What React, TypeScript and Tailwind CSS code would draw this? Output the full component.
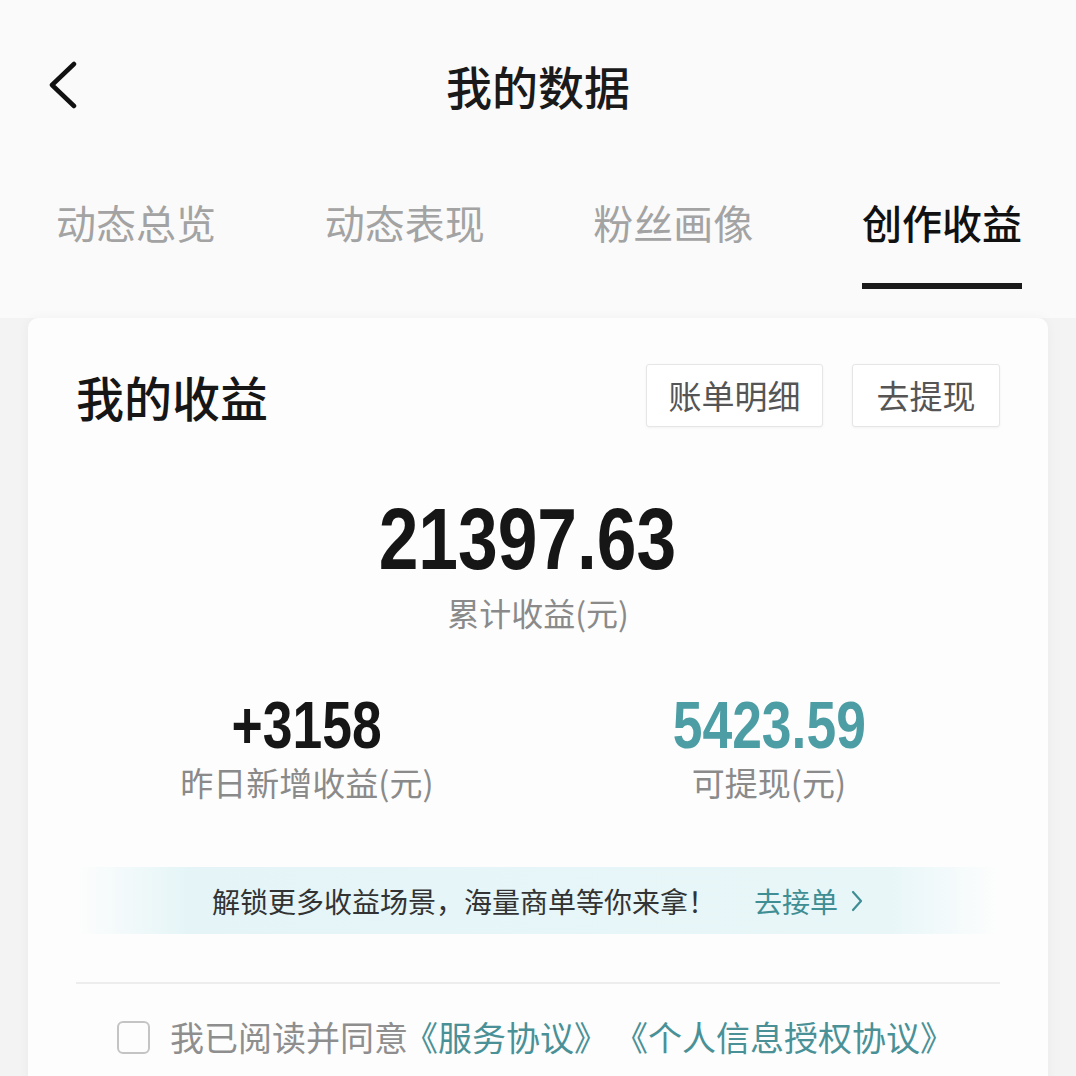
import React from 'react';

const cjk = "font-['Noto_Sans_CJK_SC','Noto_Sans',sans-serif]";
const num = "font-['Liberation_Sans','Arial',sans-serif]";

const tabs = ['动态总览', '动态表现', '粉丝画像', '创作收益'];

const BackIcon = () => (
  <svg width="34" height="48" viewBox="0 0 34 48" fill="none">
    <polyline points="28,3 6,24 28,45" stroke="#111" strokeWidth="4.5" strokeLinecap="round" strokeLinejoin="round" />
  </svg>
);

const Stat = ({ value, label, teal }: { value: string; label: string; teal?: boolean }) => (
  <div className="flex flex-col items-center">
    <div className={`${num} font-bold text-[66px] leading-[66px] scale-x-[0.81] ${teal ? 'text-[#4d9da4]' : 'text-[#161616]'}`}>{value}</div>
    <div className={`${cjk} mt-[8px] text-[33px] leading-[33px] text-[#8a8a8a]`}>{label}</div>
  </div>
);

export default function App() {
  return (
    <div className={`${cjk} w-[1076px] h-[1076px] overflow-hidden bg-[#f3f3f4]`}>
      {/* header */}
      <div className="bg-[#fafafa]">
        <div className="relative h-[170px] flex items-center justify-center">
          <div className="absolute left-[46px] top-[61px]">
            <BackIcon />
          </div>
          <h1 className="text-[46px] leading-[46px] font-medium text-[#1a1a1a]">我的数据</h1>
        </div>
        <div className="flex justify-between pl-[56px] pr-[54px] pt-[32px] h-[148px]">
          {tabs.map((t, i) => {
            const active = i === tabs.length - 1;
            return (
              <div key={t} className="flex flex-col items-center w-[160px]">
                <span className={`text-[40px] leading-[40px] ${active ? 'text-[#111] font-medium' : 'text-[#a3a3a3]'}`}>{t}</span>
                {active && <div className="mt-[41px] h-[6px] w-[160px] bg-[#1a1a1a]" />}
              </div>
            );
          })}
        </div>
      </div>

      {/* card */}
      <div className="mx-[28px] bg-[#fdfdfd] rounded-t-[10px] shadow-[0_0_12px_rgba(0,0,0,0.04)] px-[48px] pt-[46px] h-[800px]">
        <div className="flex items-center justify-between h-[63px]">
          <h2 className="text-[48px] leading-[48px] font-medium text-[#161616]">我的收益</h2>
          <div className="flex gap-[29px]">
            <button className="h-[63px] w-[177px] border border-[#e6e6e6] rounded-[3px] shadow-[0_1px_3px_rgba(0,0,0,0.05)] text-[33px] text-[#555] bg-white">账单明细</button>
            <button className="h-[63px] w-[148px] border border-[#e6e6e6] rounded-[3px] shadow-[0_1px_3px_rgba(0,0,0,0.05)] text-[33px] text-[#555] bg-white">去提现</button>
          </div>
        </div>

        <div className="flex flex-col items-center mt-[68px]">
          <div className={`${num} font-bold text-[87px] leading-[87px] scale-x-[0.82] mr-[22px] text-[#161616]`}>21397.63</div>
          <div className="mt-[14px] text-[32px] leading-[32px] text-[#8a8a8a]">累计收益(元)</div>
        </div>

        <div className="grid grid-cols-2 mt-[64px]">
          <Stat value="+3158" label="昨日新增收益(元)" />
          <Stat value="5423.59" label="可提现(元)" teal />
        </div>

        <div className="mt-[68px] h-[67px] flex items-center justify-center bg-[linear-gradient(90deg,rgba(228,245,247,0)_0%,#e5f5f7_12%,#e8f6f8_88%,rgba(228,245,247,0)_100%)]">
          <span className="text-[28px] leading-[28px] text-[#333]">解锁更多收益场景，海量商单等你来拿！</span>
          <span className="ml-[38px] text-[28px] leading-[28px] text-[#3f8e94] flex items-center">
            去接单
            <svg width="14" height="22" viewBox="0 0 14 22" className="ml-[12px]" fill="none">
              <polyline points="3,2 11,11 3,20" stroke="#3f8e94" strokeWidth="2.2" strokeLinecap="round" strokeLinejoin="round" />
            </svg>
          </span>
        </div>

        <div className="mt-[48px] h-[2px] bg-[#ededed]" />

        <div className="mt-[36px] pl-[41px] flex items-center">
          <div className="w-[33px] h-[33px] rounded-[6px] border-[2.5px] border-[#c4c4c4]" />
          <span className="ml-[20px] text-[34px] leading-[34px] text-[#8e8e8e]">我已阅读并同意</span>
          <span className="ml-[-4px] text-[34px] leading-[34px] text-[#4a9197]">《服务协议》</span>
          <span className="ml-[6px] text-[34px] leading-[34px] text-[#4a9197]">《个人信息授权协议》</span>
        </div>
      </div>
    </div>
  );
}
